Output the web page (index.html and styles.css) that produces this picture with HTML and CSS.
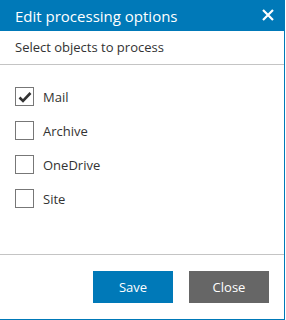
FILE: index.html
```
<!DOCTYPE html>
<html>
<head>
<meta charset="utf-8">
<link rel="stylesheet" href="styles.css">
</head>
<body>
<div class="dialog">
  <div class="header">
    <span class="title">Edit processing options</span>
    <svg class="close" width="12" height="12" viewBox="0 0 12 12"><path d="M1 1L11 11M11 1L1 11" stroke="#fff" stroke-width="2.2" fill="none"/></svg>
  </div>
  <div class="subtitle">Select objects to process</div>
  <div class="body">
    <label class="item"><span class="box"><svg width="16" height="16" viewBox="0 0 16 16"><path d="M2.5 8.5L6 12L13.5 4" stroke="#333" stroke-width="2.6" fill="none"/></svg></span><span>Mail</span></label>
    <label class="item"><span class="box"></span><span>Archive</span></label>
    <label class="item"><span class="box"></span><span>OneDrive</span></label>
    <label class="item"><span class="box"></span><span>Site</span></label>
  </div>
  <div class="footer">
    <button class="btn save">Save</button>
    <button class="btn cancel">Close</button>
  </div>
</div>
</body>
</html>
```
FILE: styles.css
```
html, body { margin: 0; padding: 0; background: #fff; }
body { font-family: "Open Sans", "Noto Sans", sans-serif; color: #333; }
.dialog {
  width: 285px; height: 320px; box-sizing: border-box;
  border-right: 1px solid #0079b8; border-bottom: 1px solid #0079b8;
  display: flex; flex-direction: column;
}
.header {
  height: 31px; flex: none; background: #0079b8; color: #fff;
  display: flex; align-items: center; justify-content: space-between;
  padding: 0 10px 0 15px;
}
.title { font-size: 15px; }
.close { display: block; margin-top: -1px; }
.subtitle {
  height: 34px; flex: none; box-sizing: border-box; border-bottom: 1px solid #c4c4c4;
  font-size: 13px; padding: 7px 0 0 15px; color: #333;
}
.body {
  flex: 1; border-bottom: 1px solid #c4c4c4;
  padding: 22px 15px 0; display: flex; flex-direction: column; gap: 15px;
}
.item { display: flex; align-items: center; font-size: 13px; height: 19px; }
.box {
  width: 19px; height: 19px; box-sizing: border-box; border: 1px solid #777;
  margin-right: 9px; display: flex; align-items: center; justify-content: center;
}
.box svg { display: block; }
.footer {
  height: 64px; flex: none; box-sizing: border-box; display: flex; justify-content: flex-end;
  padding: 16px 15px 0 0; gap: 16px;
}
.btn {
  width: 80px; height: 32px; border: none; color: #fff;
  font-family: inherit; font-size: 13px; padding: 0;
}
.save { background: #0079b8; }
.cancel { background: #666; }
```
